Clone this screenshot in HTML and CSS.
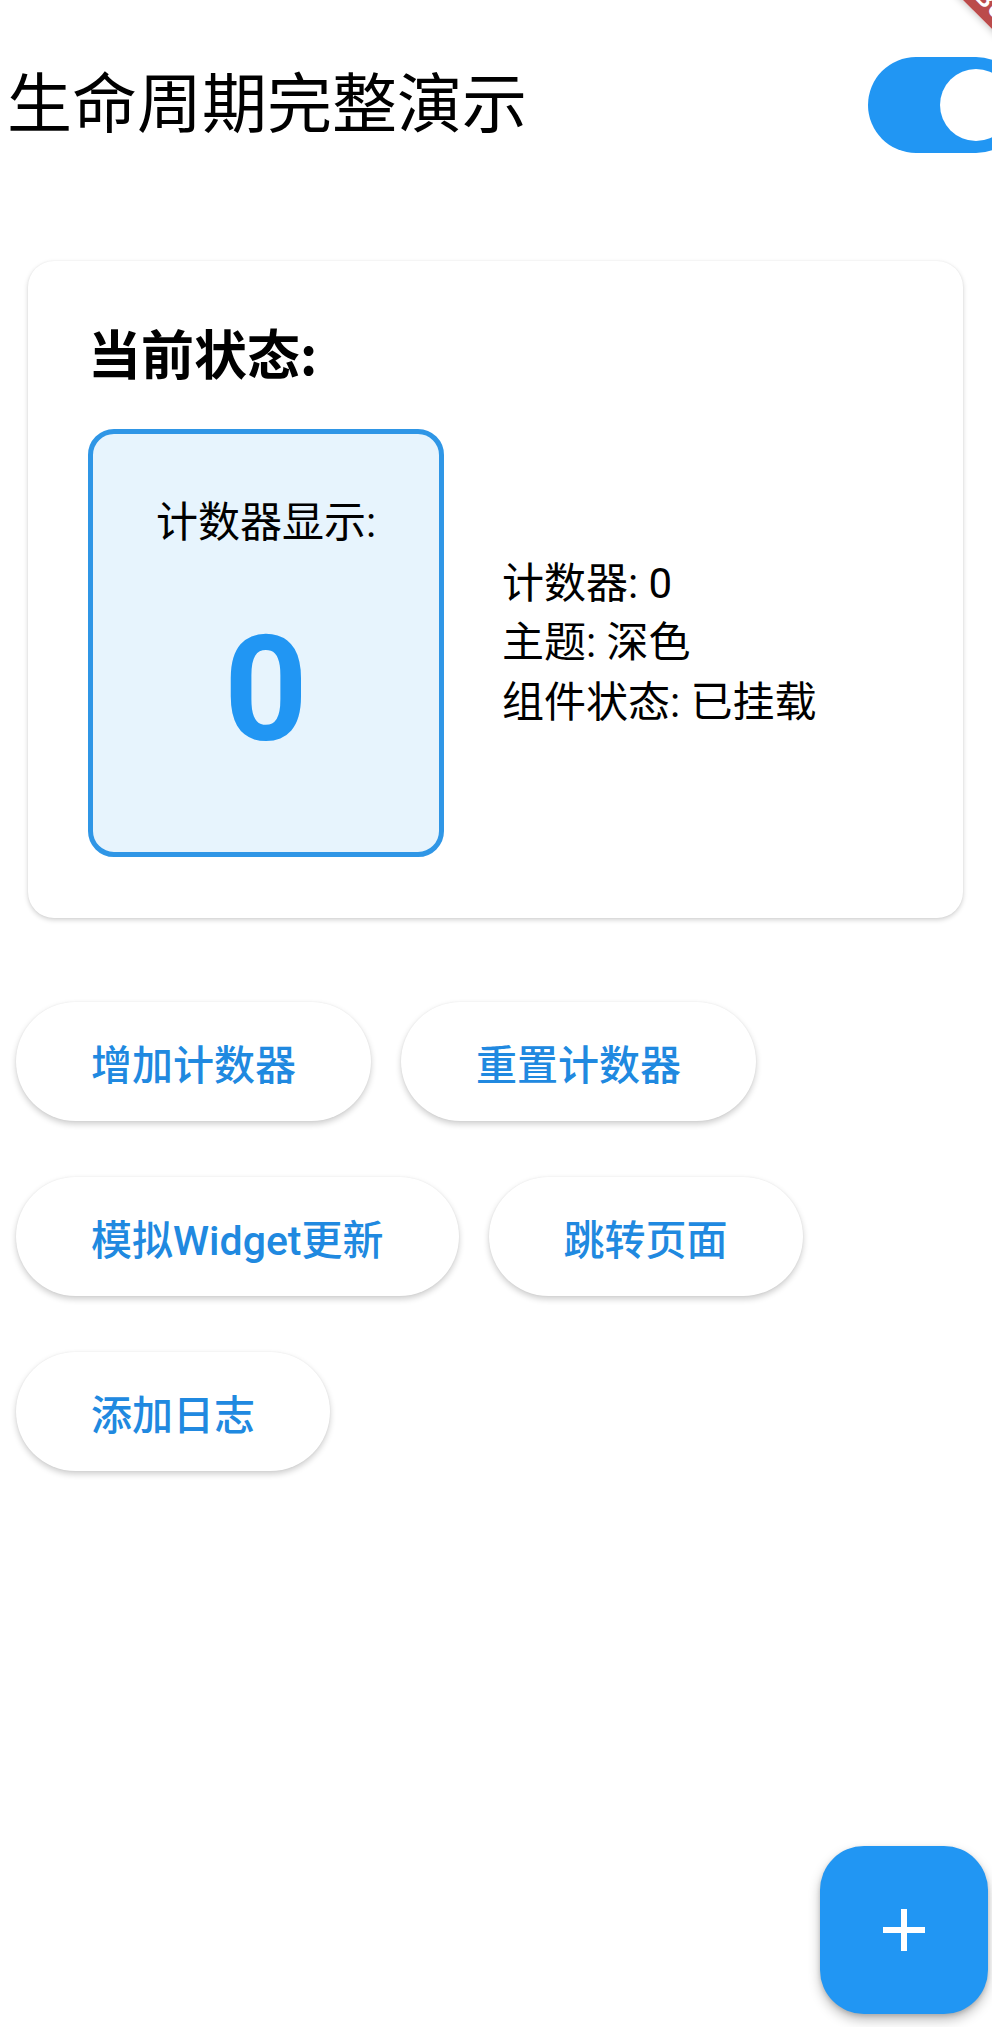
FILE: index.html
```html
<!DOCTYPE html>
<html lang="zh-CN">
<head>
<meta charset="utf-8">
<title>生命周期完整演示</title>
<link rel="stylesheet" href="styles.css">
</head>
<body>
<div class="screen">
  <header class="app-bar">
    <h1 class="app-title">生命周期完整演示</h1>
    <div class="switch" role="switch" aria-checked="true">
      <span class="switch-thumb"></span>
    </div>
  </header>

  <main class="content">
    <section class="card">
      <h2 class="card-title">当前状态:</h2>
      <div class="status-row">
        <div class="counter-box">
          <div class="counter-label">计数器显示:</div>
          <div class="counter-value">0</div>
        </div>
        <div class="info">
          <div class="info-line">计数器: 0</div>
          <div class="info-line">主题: 深色</div>
          <div class="info-line">组件状态: 已挂载</div>
        </div>
      </div>
    </section>

    <div class="actions">
      <button class="pill">增加计数器</button>
      <button class="pill">重置计数器</button>
      <button class="pill">模拟Widget更新</button>
      <button class="pill">跳转页面</button>
      <button class="pill">添加日志</button>
    </div>
  </main>

  <button class="fab" aria-label="add">
    <svg width="42" height="42" viewBox="0 0 42 42"><path d="M21 0v42M0 21h42" stroke="#fff" stroke-width="6" fill="none"/></svg>
  </button>

  <div class="debug-banner">DEBUG</div>
</div>
</body>
</html>
```

FILE: styles.css
```css
html, body {
  margin: 0;
  padding: 0;
  background: #ffffff;
}
body {
  width: 992px;
  height: 2027px;
  overflow: hidden;
  font-family: Roboto, "Noto Sans CJK SC", sans-serif;
  color: #000;
}
.screen {
  position: relative;
  width: 992px;
  height: 2027px;
  overflow: hidden;
}
.app-bar {
  display: flex;
  align-items: center;
  justify-content: space-between;
  padding: 57px 0 0 7px;
  height: 96px;
}
.app-title {
  margin: 0;
  padding-bottom: 12px;
  font-family: "Noto Sans CJK SC", sans-serif;
  font-weight: 400;
  font-size: 65px;
  line-height: 84px;
  color: #000;
}
.switch {
  flex: none;
  width: 156px;
  height: 96px;
  border-radius: 48px;
  background: #2196f3;
  margin-right: -32px;
  display: flex;
  align-items: center;
  justify-content: flex-end;
  padding-right: 12px;
  box-sizing: border-box;
}
.switch-thumb {
  width: 72px;
  height: 72px;
  border-radius: 50%;
  background: #fff;
}
.content {
  padding-top: 108px;
}
.card {
  margin-left: 28px;
  width: 935px;
  box-sizing: border-box;
  height: 657px;
  border-radius: 26px;
  background: #fff;
  box-shadow: 0 2px 5px rgba(0,0,0,0.18), 0 0 2px rgba(0,0,0,0.06);
  padding: 60px 60px 0 60px;
}
.card-title {
  margin: 0;
  font-family: "Noto Sans CJK SC", sans-serif;
  font-weight: 700;
  font-size: 53px;
  line-height: 62px;
}
.status-row {
  display: flex;
  align-items: center;
  gap: 58px;
  margin-top: 46px;
}
.counter-box {
  width: 356px;
  height: 428px;
  box-sizing: border-box;
  border: 5px solid #2f96e6;
  border-radius: 26px;
  background: #e7f4fd;
  display: flex;
  flex-direction: column;
  align-items: center;
  padding-top: 64px;
}
.counter-label {
  font-family: Roboto, "Noto Sans CJK SC", sans-serif;
  font-size: 42px;
  line-height: 50px;
  color: #000;
}
.counter-value {
  font-family: Roboto, sans-serif;
  font-weight: 700;
  font-size: 146px;
  line-height: 170px;
  color: #2196f3;
  margin-top: 58px;
}
.info {
  display: flex;
  flex-direction: column;
}
.info-line {
  font-size: 42px;
  line-height: 59.5px;
  color: #000;
}
.actions {
  display: flex;
  flex-wrap: wrap;
  column-gap: 30px;
  row-gap: 56px;
  padding: 84px 0 0 16px;
  width: 900px;
}
.pill {
  height: 119px;
  padding: 0 75px;
  border: none;
  border-radius: 60px;
  background: #fff;
  color: #2089e0;
  font-family: Roboto, "Noto Sans CJK SC", sans-serif;
  font-weight: 500;
  font-size: 41px;
  box-shadow: 0 3px 6px rgba(0,0,0,0.2), 0 0 2px rgba(0,0,0,0.06);
}
.fab {
  position: absolute;
  left: 820px;
  top: 1846px;
  width: 168px;
  height: 168px;
  border: none;
  border-radius: 44px;
  background: #2196f3;
  display: flex;
  align-items: center;
  justify-content: center;
  padding: 0;
  box-shadow: 0 6px 12px rgba(0,0,0,0.25), 0 2px 4px rgba(0,0,0,0.15);
}
.debug-banner {
  position: absolute;
  left: 837px;
  top: -17px;
  width: 300px;
  height: 34px;
  transform: rotate(45deg);
  background: rgba(170, 30, 30, 0.8);
  box-shadow: 0 0 8px rgba(0,0,0,0.3);
  color: #fff;
  font-family: Roboto, sans-serif;
  font-weight: 700;
  font-size: 24px;
  line-height: 34px;
  text-align: center;
  letter-spacing: 1px;
}
```
